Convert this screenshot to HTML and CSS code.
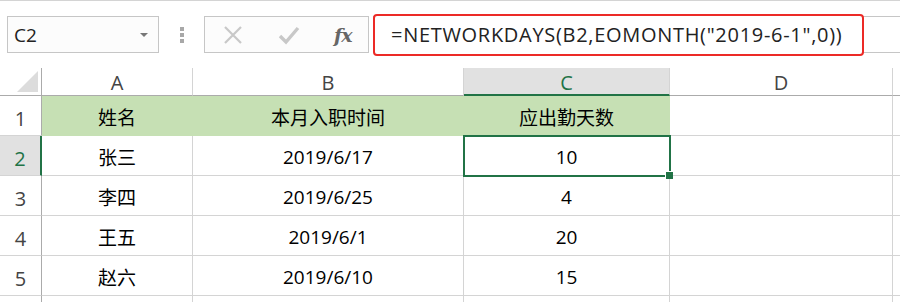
FILE: index.html
```html
<!DOCTYPE html>
<html lang="zh-CN">
<head>
    <meta charset="UTF-8">
    <title>NETWORKDAYS</title>
    <link rel="stylesheet" href="styles.css">
</head>
<body>
    <div class="excel">
        <div class="formulaBar">
            <div class="nameBox">
                <span>C2</span>
                <i class="arrow"></i>
            </div>
            <div class="dots"><i></i><i></i><i></i></div>
            <div class="btns">
                <svg class="ico" width="20" height="20" viewBox="0 0 20 20"><path d="M2 2 L18 18 M18 2 L2 18" stroke="#c8c8c8" stroke-width="2.2" fill="none"/></svg>
                <svg class="ico" width="22" height="20" viewBox="0 0 22 20"><path d="M2 11 L8 17 L20 3" stroke="#c8c8c8" stroke-width="3.4" fill="none"/></svg>
                <span class="fx">fx</span>
            </div>
            <div class="input">
                <div class="mark">=NETWORKDAYS(B2,EOMONTH("2019-6-1",0))</div>
            </div>
        </div>

        <div class="sheet">
            <div class="corner"><i></i></div>
            <div class="colHead">A</div>
            <div class="colHead">B</div>
            <div class="colHead sel">C</div>
            <div class="colHead">D</div>
            <div class="colHead last"></div>

            <div class="rowHead">1</div>
            <div class="cell title">姓名</div>
            <div class="cell title">本月入职时间</div>
            <div class="cell title">应出勤天数</div>
            <div class="cell"></div>
            <div class="cell last"></div>

            <div class="rowHead sel">2</div>
            <div class="cell">张三</div>
            <div class="cell">2019/6/17</div>
            <div class="cell active">10</div>
            <div class="cell"></div>
            <div class="cell last"></div>

            <div class="rowHead">3</div>
            <div class="cell">李四</div>
            <div class="cell">2019/6/25</div>
            <div class="cell">4</div>
            <div class="cell"></div>
            <div class="cell last"></div>

            <div class="rowHead">4</div>
            <div class="cell">王五</div>
            <div class="cell">2019/6/1</div>
            <div class="cell">20</div>
            <div class="cell"></div>
            <div class="cell last"></div>

            <div class="rowHead">5</div>
            <div class="cell">赵六</div>
            <div class="cell">2019/6/10</div>
            <div class="cell">15</div>
            <div class="cell"></div>
            <div class="cell last"></div>

            <div class="rowHead"></div>
            <div class="cell"></div>
            <div class="cell"></div>
            <div class="cell"></div>
            <div class="cell"></div>
            <div class="cell last"></div>
        </div>
    </div>
</body>
</html>
```

FILE: styles.css
```css
html,body{
    margin: 0;
    height: 100%;
    background: #fff;
    overflow: hidden;
}
.excel{
    font-family: "Open Sans", "Noto Sans CJK SC", sans-serif;
    border-top: 1px solid #d4d4d4;
}

/* 编辑栏 */
.formulaBar{
    display: flex;
    align-items: center;
    height: 37px;
    margin-top: 15px;
    padding-left: 7px;
}
.nameBox{
    box-sizing: border-box;
    width: 152px;
    height: 37px;
    border: 1px solid #c6c6c6;
    background: #fcfcfc;
    display: flex;
    align-items: center;
    justify-content: space-between;
    padding: 0 10px 0 6px;
    font-size: 19px;
    color: #222;
}
.nameBox .arrow{
    width: 0;
    height: 0;
    border-left: 4px solid transparent;
    border-right: 4px solid transparent;
    border-top: 4px solid #777;
}
.dots{
    width: 45px;
    display: flex;
    flex-direction: column;
    align-items: center;
    gap: 2px;
}
.dots i{
    width: 4px;
    height: 4px;
    background: #a8a8a8;
}
.btns{
    box-sizing: border-box;
    width: 165px;
    height: 37px;
    border: 1px solid #c6c6c6;
    background: #fcfcfc;
    display: flex;
    align-items: center;
    padding-left: 18px;
}
.btns .ico{
    margin-right: 35px;
}
.btns svg:nth-child(2){
    margin-right: 34px;
}
.fx{
    font-family: "DejaVu Serif", serif;
    font-style: italic;
    font-weight: bold;
    font-size: 19px;
    color: #666;
    letter-spacing: -1px;
}
.input{
    flex: 1;
    height: 37px;
    box-sizing: border-box;
    border-top: 1px solid #c6c6c6;
    border-bottom: 1px solid #c6c6c6;
    margin-left: 4px;
    display: flex;
    align-items: center;
}
.mark{
    box-sizing: border-box;
    width: 491px;
    height: 42px;
    border: 2px solid #ec2a26;
    border-radius: 4px;
    background: #fff;
    padding-left: 16px;
    font-size: 20px;
    letter-spacing: 0.7px;
    line-height: 38px;
    color: #222;
    white-space: nowrap;
}

/* 表格 */
.sheet{
    margin-top: 15px;
    display: grid;
    grid-template-columns: 42px 151px 271px 206px 223px 1fr;
    grid-template-rows: 28px repeat(5, 40px) 40px;
}
.sheet > div{
    box-sizing: border-box;
    display: flex;
    align-items: center;
    justify-content: center;
}
.corner{
    border-right: 1px solid #ababab;
    border-bottom: 1px solid #ababab;
    align-items: flex-end !important;
    justify-content: flex-end !important;
    padding: 0 3px 3px 0;
}
.corner i{
    width: 21px;
    height: 21px;
    background: #dcdcdc;
    clip-path: polygon(100% 0, 100% 100%, 0 100%);
}
.colHead{
    border-right: 1px solid #d4d4d4;
    border-bottom: 1px solid #ababab;
    font-size: 20px;
    color: #444;
    padding-top: 1px;
}
.colHead.last{
    border-right: none;
}
.colHead.sel{
    background: #e1e1e1;
    color: #217346;
    border-bottom: 2px solid #217346;
    padding-top: 2px;
}
.rowHead{
    border-right: 1px solid #ababab;
    border-bottom: 1px solid #d4d4d4;
    font-size: 20px;
    color: #444;
    padding-top: 6px;
}
.rowHead.sel{
    background: #e1e1e1;
    color: #217346;
    border-right: 2px solid #217346;
}
.cell{
    border-right: 1px solid #d4d4d4;
    border-bottom: 1px solid #d4d4d4;
    font-size: 19px;
    color: #000;
    padding-top: 2px;
}
.cell.last{
    border-right: none;
}
.cell.title{
    background: #c6e0b4;
    border-right-color: #c6e0b4;
    border-bottom: none;
}
.cell.active{
    position: relative;
    outline: 2px solid #217346;
    outline-offset: -1px;
}
.cell.active::after{
    content: "";
    position: absolute;
    right: -4px;
    bottom: -4px;
    width: 7px;
    height: 7px;
    background: #217346;
    border: 1px solid #fff;
    border-right: none;
    border-bottom: none;
}
```
